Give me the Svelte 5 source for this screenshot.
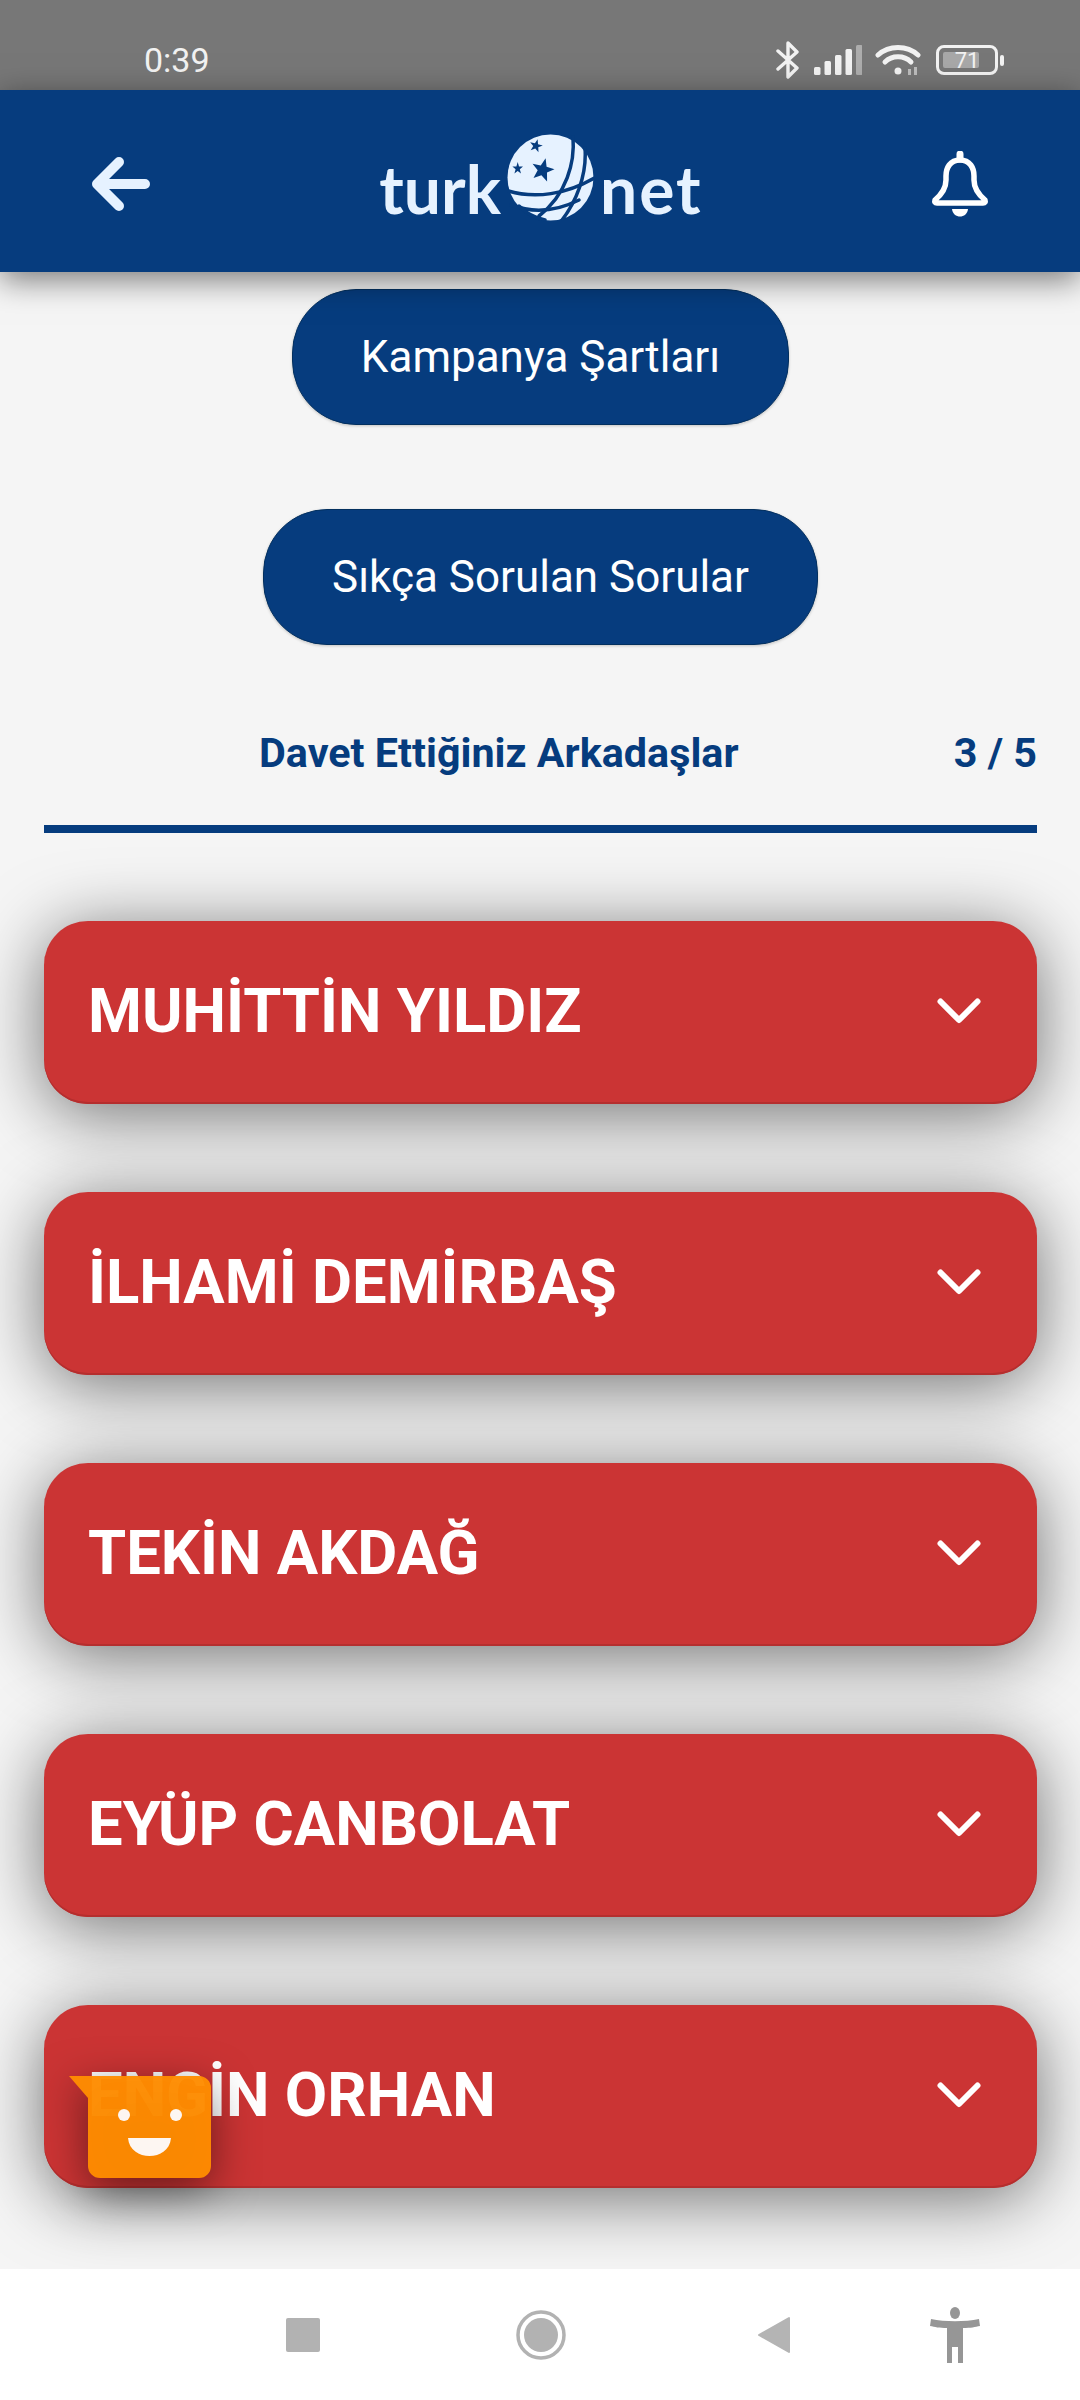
<script lang="ts">
const friends = ["MUHİTTİN YILDIZ", "İLHAMİ DEMİRBAŞ", "TEKİN AKDAĞ", "EYÜP CANBOLAT", "ENGİN ORHAN"];
const bars = [8, 14, 20, 26, 30];
</script>

<div class="screen">
	<div class="status">
		<span class="time">0:39</span>
		<div class="status-icons">
			<svg class="bt" viewBox="0 0 24 38" width="24" height="38" fill="none" stroke="#f2f2f2" stroke-width="3.4" stroke-linejoin="round" stroke-linecap="round">
				<path d="M2 10 L21 27 L12 36 V2 L21 11 L2 28" />
			</svg>
			<svg class="signal" viewBox="0 0 48 30" width="48" height="30">
				{#each bars as h, i}
					<rect x={i * 10.5} y={30 - h} width="6.5" height={h} rx="1.5" fill={i === 4 ? "#adadad" : "#f2f2f2"} />
				{/each}
			</svg>
			<svg class="wifi" viewBox="0 0 46 32" width="46" height="32" fill="none" stroke="#f2f2f2" stroke-width="5" stroke-linecap="round">
				<path d="M3 11 C14 1 32 1 43 11" />
				<path d="M10 18 C17 11 29 11 36 18" />
				<circle cx="23" cy="27" r="3.5" fill="#f2f2f2" stroke="none" />
				<rect x="33" y="25" width="3" height="6" fill="#bdbdbd" stroke="none" />
				<rect x="39" y="23" width="3" height="8" fill="#bdbdbd" stroke="none" />
			</svg>
			<div class="battery">
				<div class="battery-body">
					<div class="battery-fill"></div>
					<span>71</span>
				</div>
				<div class="battery-nub"></div>
			</div>
		</div>
	</div>

	<header class="topbar">
		<svg class="back" viewBox="0 0 58 56" width="58" height="56" fill="none" stroke="#e6f2ff" stroke-width="10" stroke-linecap="round" stroke-linejoin="round">
			<path d="M27 6 L5 28 L27 50 M5 28 H53" />
		</svg>
		<div class="logo">
			<span class="word">turk</span>
			<svg class="globe" viewBox="0 0 87 87" width="87" height="87">
				<circle cx="43.5" cy="43.5" r="43" fill="#e6f2ff" />
				<g fill="none" stroke="#063c7e" stroke-width="3.5" stroke-linecap="round">
					<path d="M66 3 C68 28 60 60 32 82" />
					<path d="M78 14 C80 40 70 68 52 90" />
					<path d="M-2 56 C28 66 60 60 89 43" />
					<path d="M4 71 C28 80 52 76 72 66" />
					<path d="M12 72 C20 80 28 84 38 86" />
				</g>
				<g fill="#063c7e">
					<polygon points="35.7,24 38.7,32 47,32.5 40.5,37.5 42.7,46 35.7,41.3 28.7,46 30.9,37.5 24.4,32.5 32.7,32" transform="rotate(14 35.7 36)" />
					<polygon points="29,5 30.6,9.7 35.5,9.8 31.6,12.7 33,17.5 29,14.7 25,17.5 26.4,12.7 22.5,9.8 27.4,9.7" transform="rotate(14 29 11.7)" />
					<polygon points="10.7,28 12,32.5 16,32.5 12.8,35.2 14,39.5 10.7,37 7.4,39.5 8.6,35.2 5.4,32.5 9.4,32.5" />
				</g>
			</svg>
			<span class="word net">net</span>
		</div>
		<svg class="bell" viewBox="0 0 58 66" width="58" height="66" fill="none" stroke="#fff" stroke-width="5.5" stroke-linejoin="round">
			<path d="M29 9 C19 9 15 17 15 25 V29 C15 38 10 44 4 49 Q3 52 6 52 H52 Q55 52 54 49 C48 44 43 38 43 29 V25 C43 17 39 9 29 9 Z" />
			<path d="M29 8 V3" stroke-linecap="round" stroke-width="7" />
			<path d="M21 58 H37 C36 68 22 68 21 58 Z" fill="#fff" stroke="none" />
		</svg>
	</header>

	<main class="content">
		<div class="links">
			<button class="pill">Kampanya Şartları</button>
			<button class="pill">Sıkça Sorulan Sorular</button>
		</div>

		<div class="section-head">
			<h2>Davet Ettiğiniz Arkadaşlar</h2>
			<span>3 / 5</span>
		</div>

		<div class="friends">
			{#each friends as name}
				<div class="friend">
					<span>{name}</span>
					<svg viewBox="0 0 44 26" width="44" height="26" fill="none" stroke="#fff" stroke-width="6" stroke-linecap="round" stroke-linejoin="round">
						<path d="M3.5 3.5 L22 22 L40.5 3.5" />
					</svg>
				</div>
			{/each}
		</div>

		<svg class="chat" viewBox="0 0 143 102" width="143" height="102">
			<path d="M0 0 H130 A12 12 0 0 1 142 12 V90 A12 12 0 0 1 130 102 H31 A12 12 0 0 1 19 90 V22 Z" fill="#ff8c00" fill-opacity="0.96" />
			<circle cx="55" cy="39" r="6" fill="#fdf6f2" />
			<circle cx="107" cy="39" r="6" fill="#fdf6f2" />
			<path d="M59 62 H102 C100 86 61 86 59 62 Z" fill="#fdf6f2" />
		</svg>
	</main>

	<nav class="navbar">
		<div class="nav-square"></div>
		<svg class="nav-home" viewBox="0 0 50 50" width="50" height="50">
			<circle cx="25" cy="25" r="23" fill="none" stroke="#b2b2b2" stroke-width="3.5" />
			<circle cx="25" cy="25" r="17" fill="#b2b2b2" />
		</svg>
		<svg class="nav-back" viewBox="0 0 34 38" width="34" height="38">
			<path d="M32 2 V36 L2 19 Z" fill="#b4b4b4" stroke="#b4b4b4" stroke-width="2" stroke-linejoin="round" />
		</svg>
		<svg class="nav-person" viewBox="0 0 50 56" width="50" height="56" fill="#969696">
			<ellipse cx="25" cy="6" rx="5" ry="6" />
			<path d="M1 12 C15 15 35 15 49 12 L50 19 C45 20 41 21 33 21 V56 H28 V40 H22 V56 H17 V21 C9 21 5 20 0 19 Z" />
		</svg>
	</nav>
</div>

<style>
	:global(body) {
		margin: 0;
		background: #f5f5f5;
	}

	.screen {
		width: 1080px;
		height: 2400px;
		display: flex;
		flex-direction: column;
		overflow: hidden;
		font-family: Roboto, "Liberation Sans", sans-serif;
		background: #f5f5f5;
	}

	.status {
		height: 90px;
		flex: none;
		background: #777777;
		display: flex;
		align-items: center;
		justify-content: space-between;
		padding: 30px 76px 0 144px;
		box-sizing: border-box;
		color: #f2f2f2;
	}

	.time {
		font-size: 34px;
	}

	.status-icons {
		display: flex;
		align-items: center;
		gap: 13px;
	}

	.bt {
		margin-right: 1px;
	}

	.wifi {
		margin-right: 2px;
	}

	.battery {
		display: flex;
		align-items: center;
		gap: 2px;
	}

	.battery-body {
		width: 62px;
		height: 30px;
		box-sizing: border-box;
		border: 3.5px solid #f2f2f2;
		border-radius: 8px;
		display: flex;
		align-items: center;
		justify-content: center;
		position: relative;
		font-size: 22px;
		color: #f2f2f2;
	}

	.battery-body span {
		position: relative;
	}

	.battery-fill {
		position: absolute;
		left: 4px;
		top: 4px;
		bottom: 4px;
		width: 36px;
		background: #a8a8a8;
		border-radius: 2px;
	}

	.battery-nub {
		width: 4px;
		height: 11px;
		background: #f2f2f2;
		border-radius: 2px;
	}

	.topbar {
		height: 182px;
		flex: none;
		background: #063c7e;
		display: flex;
		align-items: center;
		justify-content: space-between;
		padding: 6px 91px 0 92px;
		box-sizing: border-box;
		box-shadow: 0 8px 30px rgba(0, 0, 0, 0.5);
		position: relative;
		z-index: 2;
	}

	.logo {
		display: flex;
		align-items: center;
		gap: 6px;
		margin-left: 1px;
	}

	.word {
		font-family: Lato, sans-serif;
		font-size: 66px;
		line-height: 1;
		font-weight: 700;
		color: #e6f2ff;
		position: relative;
		top: 5px;
	}

	.net {
		letter-spacing: 2px;
	}

	.globe {
		position: relative;
		top: -7px;
	}

	.content {
		flex: 1;
		position: relative;
		padding: 17px 43px 0 44px;
		display: flex;
		flex-direction: column;
	}

	.links {
		display: flex;
		flex-direction: column;
		align-items: center;
		gap: 84px;
	}

	.pill {
		height: 136px;
		padding: 0 68px;
		border: 1px solid #03305f;
		border-radius: 64px;
		background: #063c7e;
		color: #fff;
		font-family: inherit;
		font-size: 44px;
		box-shadow: 0 1px 3px rgba(0, 0, 0, 0.2);
	}

	.section-head {
		display: flex;
		justify-content: space-between;
		margin-top: 84px;
		padding: 0 0 48px 215px;
		border-bottom: 8px solid #063c7e;
		color: #063c7e;
		font-size: 41.3px;
		line-height: 48px;
		font-weight: 700;
	}

	.section-head h2 {
		margin: 0;
		font: inherit;
	}

	.friends {
		margin-top: 88px;
		display: flex;
		flex-direction: column;
		gap: 88px;
	}

	.friend {
		height: 183px;
		box-sizing: border-box;
		background: #cb3434;
		border-radius: 44px;
		padding: 0 56px 3px 44px;
		display: flex;
		align-items: center;
		justify-content: space-between;
		color: #fff;
		font-size: 61.6px;
		font-weight: 700;
		box-shadow: inset 0 -2px 0 #b52e2e, 0 10px 70px rgba(0, 0, 0, 0.55);
	}

	.chat {
		position: absolute;
		left: 69px;
		top: 1804px;
		filter: drop-shadow(0 12px 22px rgba(0, 0, 0, 0.5));
	}

	.navbar {
		height: 131px;
		flex: none;
		background: #fff;
		position: relative;
		z-index: 2;
		display: grid;
		grid-template-columns: 286px 34px 196px 50px 191px 34px 139px 50px;
		align-items: center;
	}

	.nav-square {
		grid-column: 2;
		width: 34px;
		height: 34px;
		border-radius: 2px;
		background: #b2b2b2;
	}

	.nav-home {
		grid-column: 4;
	}

	.nav-back {
		grid-column: 6;
	}

	.nav-person {
		grid-column: 8;
	}
</style>
